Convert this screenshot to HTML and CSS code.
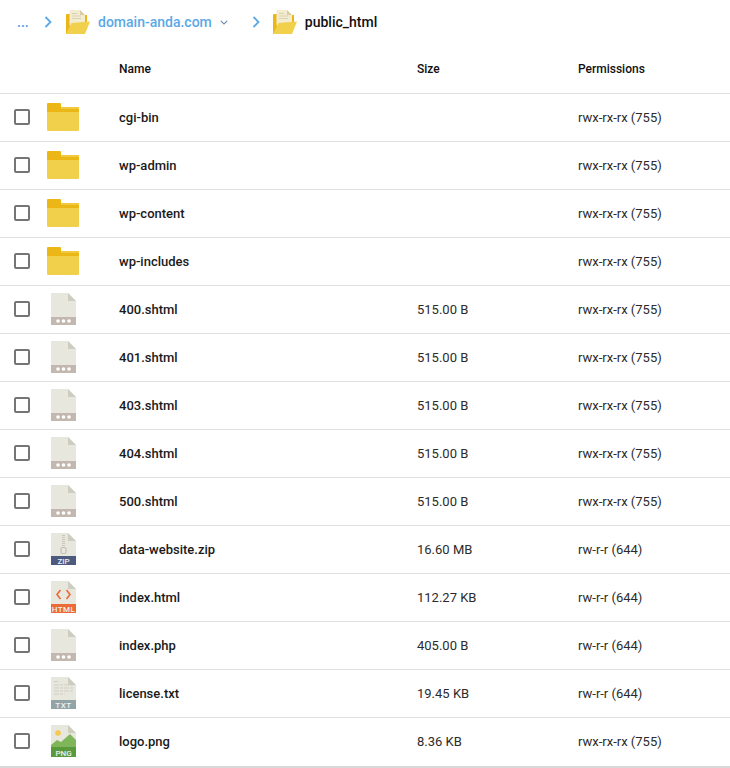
FILE: index.html
```html
<!DOCTYPE html>
<html lang="en">
<head>
<meta charset="utf-8">
<title>File manager</title>
<link rel="stylesheet" href="styles.css">
</head>
<body>
<svg class="defs" width="0" height="0" aria-hidden="true">
  <defs>
    <symbol id="folder" viewBox="0 0 32 28">
      <path d="M0 1a1 1 0 0 1 1-1h12a1 1 0 0 1 1 1v3h17a1 1 0 0 1 1 1v5H0z" fill="#edb617"/>
      <path d="M14 4h17a1 1 0 0 1 1 1v1H14z" fill="#f1c93f"/>
      <path d="M0 9h32v18a1 1 0 0 1-1 1H1a1 1 0 0 1-1-1z" fill="#f1d04b"/>
    </symbol>
    <symbol id="open" viewBox="0 0 24 24">
      <path d="M0 5a1 1 0 0 1 1-1h3v20H0z" fill="#edb617"/>
      <path d="M18 5h3v8h-3z" fill="#edb617"/>
      <path d="M3.500 0H14l5 5v10H3.500z" fill="#f3ecd0"/>
      <path d="M14 0l5 5h-5z" fill="#d8cda6"/>
      <path d="M6 3.500h5M6 6h9M6 8.500h9" stroke="#d9d2b4" stroke-width="1"/>
      <path d="M5.500 13L24 11.500 19 24H0z" fill="#f1d04b"/>
    </symbol>
    <symbol id="page" viewBox="0 0 25 32">
      <path d="M0 0h17l8 8v24H0z" fill="#e8e7de"/>
      <path d="M17 0l8 8h-8z" fill="#cfcdc0"/>
    </symbol>
  </defs>
</svg>

<nav class="crumbs">
  <span class="more">...</span>
  <svg class="chev chev-a" viewBox="0 0 8 12"><path d="M1.500 1l5 5-5 5" fill="none" stroke="#5aa9e6" stroke-width="1.800"/></svg>
  <svg class="open"><use href="#open"/></svg>
  <span class="link">domain-anda.com</span>
  <svg class="caret" viewBox="0 0 8 5"><path d="M.8.8L4 4l3.200-3.200" fill="none" stroke="#6a8fae" stroke-width="1.100"/></svg>
  <svg class="chev chev-b" viewBox="0 0 8 12"><path d="M1.500 1l5 5-5 5" fill="none" stroke="#5aa9e6" stroke-width="1.800"/></svg>
  <svg class="open"><use href="#open"/></svg>
  <span class="current">public_html</span>
</nav>

<div class="table">
  <div class="row head"><span></span><span></span><span>Name</span><span>Size</span><span>Permissions</span></div>

  <div class="row"><i class="box"></i><svg class="folder"><use href="#folder"/></svg><span class="name">cgi-bin</span><span></span><span>rwx-rx-rx (755)</span></div>
  <div class="row"><i class="box"></i><svg class="folder"><use href="#folder"/></svg><span class="name">wp-admin</span><span></span><span>rwx-rx-rx (755)</span></div>
  <div class="row"><i class="box"></i><svg class="folder"><use href="#folder"/></svg><span class="name">wp-content</span><span></span><span>rwx-rx-rx (755)</span></div>
  <div class="row"><i class="box"></i><svg class="folder"><use href="#folder"/></svg><span class="name">wp-includes</span><span></span><span>rwx-rx-rx (755)</span></div>

  <div class="row"><i class="box"></i><svg class="file" viewBox="0 0 25 32"><use href="#page" width="25" height="32"/><rect y="24" width="25" height="8" fill="#c2b8b0"/><circle cx="7" cy="28" r="1.800" fill="#fff"/><circle cx="12.500" cy="28" r="1.800" fill="#fff"/><circle cx="18" cy="28" r="1.800" fill="#fff"/></svg><span class="name">400.shtml</span><span>515.00 B</span><span>rwx-rx-rx (755)</span></div>
  <div class="row"><i class="box"></i><svg class="file" viewBox="0 0 25 32"><use href="#page" width="25" height="32"/><rect y="24" width="25" height="8" fill="#c2b8b0"/><circle cx="7" cy="28" r="1.800" fill="#fff"/><circle cx="12.500" cy="28" r="1.800" fill="#fff"/><circle cx="18" cy="28" r="1.800" fill="#fff"/></svg><span class="name">401.shtml</span><span>515.00 B</span><span>rwx-rx-rx (755)</span></div>
  <div class="row"><i class="box"></i><svg class="file" viewBox="0 0 25 32"><use href="#page" width="25" height="32"/><rect y="24" width="25" height="8" fill="#c2b8b0"/><circle cx="7" cy="28" r="1.800" fill="#fff"/><circle cx="12.500" cy="28" r="1.800" fill="#fff"/><circle cx="18" cy="28" r="1.800" fill="#fff"/></svg><span class="name">403.shtml</span><span>515.00 B</span><span>rwx-rx-rx (755)</span></div>
  <div class="row"><i class="box"></i><svg class="file" viewBox="0 0 25 32"><use href="#page" width="25" height="32"/><rect y="24" width="25" height="8" fill="#c2b8b0"/><circle cx="7" cy="28" r="1.800" fill="#fff"/><circle cx="12.500" cy="28" r="1.800" fill="#fff"/><circle cx="18" cy="28" r="1.800" fill="#fff"/></svg><span class="name">404.shtml</span><span>515.00 B</span><span>rwx-rx-rx (755)</span></div>
  <div class="row"><i class="box"></i><svg class="file" viewBox="0 0 25 32"><use href="#page" width="25" height="32"/><rect y="24" width="25" height="8" fill="#c2b8b0"/><circle cx="7" cy="28" r="1.800" fill="#fff"/><circle cx="12.500" cy="28" r="1.800" fill="#fff"/><circle cx="18" cy="28" r="1.800" fill="#fff"/></svg><span class="name">500.shtml</span><span>515.00 B</span><span>rwx-rx-rx (755)</span></div>

  <div class="row"><i class="box"></i><svg class="file" viewBox="0 0 25 32"><use href="#page" width="25" height="32"/><path d="M12.500 2v12" stroke="#c9c7bd" stroke-width="3" stroke-dasharray="1 1"/><rect x="10" y="14.500" width="5" height="6" rx="1.500" fill="none" stroke="#c2c0b5" stroke-width="1.200"/><rect y="23" width="25" height="9" fill="#4d5a80"/><text class="tag" x="12.500" y="30.500">ZIP</text></svg><span class="name">data-website.zip</span><span>16.60 MB</span><span>rw-r-r (644)</span></div>

  <div class="row"><i class="box"></i><svg class="file" viewBox="0 0 25 32"><use href="#page" width="25" height="32"/><path d="M9.500 9l-3.500 4.500 3.500 4.500M15.500 9l3.500 4.500-3.500 4.500" fill="none" stroke="#ec6a35" stroke-width="1.600"/><rect y="23" width="25" height="9" fill="#ec6a35"/><text class="tag tag-wide" x="12.500" y="30.500">HTML</text></svg><span class="name">index.html</span><span>112.27 KB</span><span>rw-r-r (644)</span></div>

  <div class="row"><i class="box"></i><svg class="file" viewBox="0 0 25 32"><use href="#page" width="25" height="32"/><rect y="24" width="25" height="8" fill="#c2b8b0"/><circle cx="7" cy="28" r="1.800" fill="#fff"/><circle cx="12.500" cy="28" r="1.800" fill="#fff"/><circle cx="18" cy="28" r="1.800" fill="#fff"/></svg><span class="name">index.php</span><span>405.00 B</span><span>rw-r-r (644)</span></div>

  <div class="row"><i class="box"></i><svg class="file" viewBox="0 0 25 32"><use href="#page" width="25" height="32"/><path d="M3 4.500h4M3 8h19M3 11h19M3 14h19M3 17h11" stroke="#cfcdc3" stroke-width="1" stroke-dasharray="5 1 3 1"/><rect y="23" width="25" height="9" fill="#92a4a6"/><text class="tag tag-spaced" x="12.500" y="30.500">TXT</text></svg><span class="name">license.txt</span><span>19.45 KB</span><span>rw-r-r (644)</span></div>

  <div class="row last"><i class="box"></i><svg class="file" viewBox="0 0 25 32"><use href="#page" width="25" height="32"/><circle cx="7" cy="8" r="2.800" fill="#f3c94e"/><path d="M0 22v-2l6-5 4 2 9-8 6 6v7z" fill="#7fb65a"/><rect y="22" width="25" height="10" fill="#5b9a3c"/><text class="tag" x="12.500" y="30.500">PNG</text></svg><span class="name">logo.png</span><span>8.36 KB</span><span>rwx-rx-rx (755)</span></div>
</div>
</body>
</html>
```
FILE: styles.css
```css
* { box-sizing: border-box; }
html, body { margin: 0; padding: 0; background: #fff; }
body {
  width: 730px;
  height: 768px;
  overflow: hidden;
  font-family: Roboto, "Liberation Sans", sans-serif;
  font-size: 13px;
  color: #2b2b2b;
}
.defs { position: absolute; }

.crumbs {
  display: flex;
  align-items: center;
  height: 44px;
  padding-left: 17px;
}
.more { color: #4f9fe0; font-size: 14px; font-weight: 500; width: 27px; }
.chev { width: 8px; height: 12px; flex: none; }
.chev-a { margin-right: 14px; }
.chev-b { margin-left: 24px; margin-right: 13px; }
.open { width: 24px; height: 24px; flex: none; }
.link { color: #5aa9e6; font-size: 14px; font-weight: 500; margin-left: 8px; }
.current { color: #111; font-size: 14px; font-weight: 500; margin-left: 8px; }
.caret { width: 8px; height: 5px; margin-left: 8px; }

.row {
  display: grid;
  grid-template-columns: 33px 72px 298px 161px 1fr;
  align-items: center;
  height: 48px;
  padding-left: 14px;
  border-bottom: 1px solid #e0e0e0;
}
.head { height: 50px; color: #111; font-size: 12px; font-weight: 500; }
.last { height: 50px; padding-bottom: 1px; border-bottom: 2px solid #d8d8d8; }

.box {
  display: block;
  width: 16px;
  height: 16px;
  margin-bottom: 1px;
  border: 2px solid #757575;
  border-radius: 2px;
}
.folder { width: 32px; height: 28px; margin-bottom: 1px; }
.file { width: 25px; height: 32px; margin-left: 4px; margin-bottom: 1px; }
.tag {
  font-family: Roboto, "Liberation Sans", sans-serif;
  font-size: 8px;
  font-weight: 500;
  fill: #eef0f2;
  text-anchor: middle;
}
.tag-wide { letter-spacing: 0.4px; }
.tag-spaced { letter-spacing: 0.6px; }
.name { color: #1a1a1a; font-weight: 500; }
```
